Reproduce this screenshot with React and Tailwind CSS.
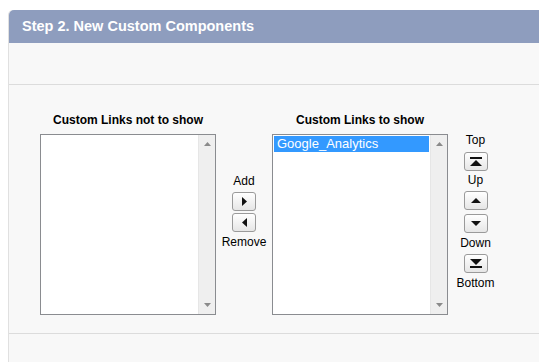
import React from "react";

const font = { fontFamily: '"Liberation Sans", Arial, sans-serif' };

function Btn({ children }) {
  return (
    <div className="w-[24px] h-[19px] border border-[#9a9a9a] rounded-[3px] bg-gradient-to-b from-[#ffffff] to-[#e6e6e6] flex items-center justify-center">
      {children}
    </div>
  );
}

function ListBox({ items = [] }) {
  return (
    <div className="w-[176px] h-[181px] border border-[#8a8c90] bg-white flex">
      <div className="flex-1 p-[1px]">
        {items.map((t) => (
          <div key={t} className="h-[16px] bg-[#3399ff] text-white text-[13px] leading-[16px] pl-[3px]">
            {t}
          </div>
        ))}
      </div>
      <div className="w-[17px] bg-[#efefef] border-l border-[#e6e6e6] flex flex-col justify-between items-center py-[7px]">
        <svg width="7" height="4" viewBox="0 0 7 4"><path d="M3.5 0 L7 4 L0 4 Z" fill="#8a8a8a" /></svg>
        <svg width="7" height="4" viewBox="0 0 7 4"><path d="M0 0 L7 0 L3.5 4 Z" fill="#8a8a8a" /></svg>
      </div>
    </div>
  );
}

export default function App() {
  return (
    <div className="w-[539px] h-[362px] bg-white pt-[10px] pl-[8px] overflow-hidden" style={font}>
      <div className="bg-[#f8f8f8] border-l border-[#e0e0e0] h-[352px] rounded-tl-[5px]">
        <div className="h-[33px] bg-[#8e9dbe] rounded-tl-[5px] pl-[13px] flex items-center">
          <span className="text-white font-bold text-[14.5px] leading-none">Step 2. New Custom Components</span>
        </div>
        <div className="h-[42px] border-b border-[#dcdcdc]"></div>
        <div className="h-[249px] border-b border-[#dcdcdc] pl-[31px] pt-[9px] flex items-center text-[12px] text-black">
          <div className="flex flex-col items-center">
            <div className="font-bold leading-[14px] mb-[7px]">Custom Links not to show</div>
            <ListBox />
          </div>
          <div className="w-[56px] flex flex-col items-center self-center mb-[4px]">
            <div className="leading-[14px] mb-[4px]">Add</div>
            <Btn>
              <svg width="5" height="9" viewBox="0 0 5 9"><path d="M0 0 L5 4.5 L0 9 Z" fill="#111" /></svg>
            </Btn>
            <div className="h-[2px]"></div>
            <Btn>
              <svg width="5" height="9" viewBox="0 0 5 9"><path d="M5 0 L0 4.5 L5 9 Z" fill="#111" /></svg>
            </Btn>
            <div className="leading-[14px] mt-[3px]">Remove</div>
          </div>
          <div className="flex flex-col items-center">
            <div className="font-bold leading-[14px] mb-[7px]">Custom Links to show</div>
            <ListBox items={["Google_Analytics"]} />
          </div>
          <div className="w-[55px] flex flex-col items-center self-center mb-[4px]">
            <div className="leading-[14px] mb-[5px]">Top</div>
            <Btn>
              <svg width="12" height="9" viewBox="0 0 12 9"><rect x="0" y="0" width="12" height="2" fill="#111" /><path d="M6 3 L12 9 L0 9 Z" fill="#111" /></svg>
            </Btn>
            <div className="leading-[14px] mt-[2px] mb-[4px]">Up</div>
            <Btn>
              <svg width="10" height="5" viewBox="0 0 10 5"><path d="M5 0 L10 5 L0 5 Z" fill="#111" /></svg>
            </Btn>
            <div className="h-[4px]"></div>
            <Btn>
              <svg width="10" height="5" viewBox="0 0 10 5"><path d="M0 0 L10 0 L5 5 Z" fill="#111" /></svg>
            </Btn>
            <div className="leading-[14px] mt-[3px] mb-[4px]">Down</div>
            <Btn>
              <svg width="12" height="9" viewBox="0 0 12 9"><path d="M0 0 L12 0 L6 6 Z" fill="#111" /><rect x="0" y="7" width="12" height="2" fill="#111" /></svg>
            </Btn>
            <div className="leading-[14px] mt-[3px]">Bottom</div>
          </div>
        </div>
      </div>
    </div>
  );
}
